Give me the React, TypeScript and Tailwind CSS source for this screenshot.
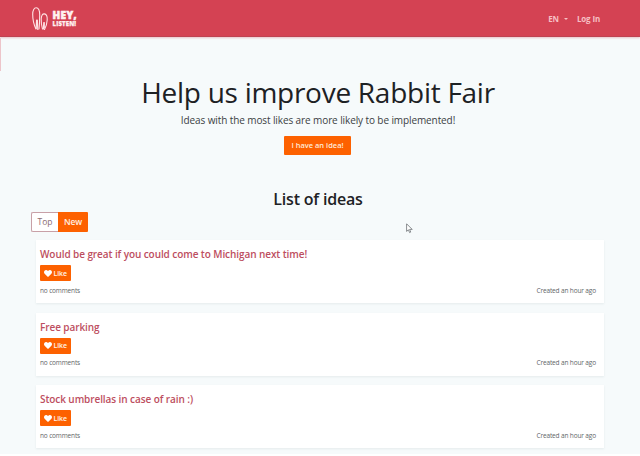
import React from "react";

const ideas = [
  "Would be great if you could come to Michigan next time!",
  "Free parking",
  "Stock umbrellas in case of rain :)",
];

function Logo() {
  return (
    <div className="flex items-start">
      <svg width="17" height="24" viewBox="0 0 17 24" fill="none" stroke="#ffe2e4" strokeWidth="1.1" strokeLinecap="round">
        <path d="M4 22 C1.5 17 .7 12 .7 7.5 C.7 3 2.2 .8 4.2 .8 C6.5 .8 7.7 4 7.7 8 C7.7 13 7.5 18 7 22" />
        <path d="M10.5 22 C9.4 18 9.1 15 9.2 12 C9.4 8.5 10.6 6.7 12.3 6.9 C14.7 7.2 15.4 10 15.2 13 C15 17 13.8 20 12.5 22.5" />
        <path d="M4.2 21.5 L4.6 13 M5.8 22.5 L5.3 13 M11.4 22 L11.8 15.5 M12.3 21 L12.3 15.5" strokeWidth="1.2" />
      </svg>
      <div className="ml-[3.5px] mt-[3px] flex flex-col font-extrabold text-[#fff0f0]">
        <span className="text-[10px] leading-[10px] tracking-[0.4px] [-webkit-text-stroke:0.6px_#fff0f0]">HEY,</span>
        <span className="mt-[0.5px] text-[6px] leading-[6px] tracking-[0.15px] [-webkit-text-stroke:0.25px_#fff0f0]">LISTEN!</span>
      </div>
    </div>
  );
}

function Heart() {
  return (
    <svg width="8" height="7" viewBox="0 0 512 448" fill="#fff">
      <path d="M462 30C408-16 326-8 276 44l-20 21-20-21C186-8 104-16 50 30c-63 54-66 150-10 208l193 200c13 13 33 13 46 0l193-200c56-58 53-154-10-208z" />
    </svg>
  );
}

function IdeaCard({ title }: { title: string }) {
  return (
    <article className="flex h-[63px] flex-col bg-white pl-1 pr-2 shadow-[0_1px_2px_rgba(40,60,70,0.08)]">
      <h3 className="mt-[6px] whitespace-nowrap text-[10px] font-semibold leading-4 tracking-[-0.08px] text-[#bd4e60]">{title}</h3>
      <button className="mt-[3px] flex h-4 w-[31px] items-center justify-center gap-[1.5px] rounded-[1px] bg-[#fd6100] text-[7px] font-semibold leading-none tracking-[-0.1px] text-[#fff3e8]">
        <Heart />
        Like
      </button>
      <div className="mt-[4.5px] flex justify-between whitespace-nowrap text-[6.5px] leading-[10px] text-[#626668]">
        <span className="tracking-[-0.15px]">no comments</span>
        <span className="tracking-[-0.14px]">Created an hour ago</span>
      </div>
    </article>
  );
}

export default function App() {
  return (
    <div className="relative flex h-[456px] w-[640px] flex-col overflow-hidden bg-[#f6fafb] font-['Open_Sans','Noto_Sans',sans-serif] text-[#1d2124]">
      <header className="flex h-[37px] shrink-0 items-start justify-between border-b border-[#be4251] bg-[#d44253] pl-8 pr-10 pt-[7px] shadow-[0_1px_2px_rgba(200,60,75,0.3)]">
        <Logo />
        <nav className="mt-[6px] flex items-center whitespace-nowrap text-[8px] font-bold leading-3 tracking-[-0.15px] text-[#f6bfc3]">
          <span>EN</span>
          <span className="ml-[5px] border-x-[2.5px] border-t-[2.5px] border-x-transparent border-t-[#f6bfc3]" />
          <span className="ml-[9px]">Log In</span>
        </nav>
      </header>
      <main className="flex grow flex-col pl-9 pr-9">
        <section className="-ml-1 flex flex-col items-center whitespace-nowrap">
          <h1 className="mt-[35px] text-[28px] font-normal leading-10 tracking-[-0.27px]">Help us improve Rabbit Fair</h1>
          <p className="text-[10px] leading-4 tracking-[-0.1px] text-[#3b4043]">Ideas with the most likes are more likely to be implemented!</p>
          <button className="-ml-px mt-[8px] h-[19px] w-[67px] rounded-[1px] bg-[#fd6100] text-[7.5px] font-semibold leading-none text-[#ffe9d8]">I have an idea!</button>
          <h2 className="mt-[32px] text-[16px] font-semibold leading-6 tracking-[-0.2px]">List of ideas</h2>
        </section>
        <div className="-ml-[5px] mt-[1px] flex h-5 w-[57px] text-[8.5px] leading-none">
          <button className="w-[27px] rounded-l-[2px] border border-r-0 border-[#c8a0a7] bg-white text-[#8b6b73]">Top</button>
          <button className="w-[30px] rounded-r-[1px] bg-[#fd6100] font-semibold tracking-[-0.2px] text-[#fff0e4]">New</button>
        </div>
        <div className="mt-[8px] flex flex-col gap-[9.5px]">
          {ideas.map((title) => (
            <IdeaCard key={title} title={title} />
          ))}
        </div>
      </main>
      <span className="absolute left-0 top-[38px] h-[33px] w-px bg-[#edc5ca]" />
      <span className="absolute bottom-0 left-0 h-[2px] w-full bg-white" />
      <svg className="absolute left-[406px] top-[223px]" width="7" height="11" viewBox="0 0 7 11" fill="#fff" stroke="#6b7073" strokeWidth=".8">
        <path d="M.6 .8V8.4L2.4 6.8L3.6 9.6L4.7 9.1L3.6 6.4H6.2Z" />
      </svg>
    </div>
  );
}
